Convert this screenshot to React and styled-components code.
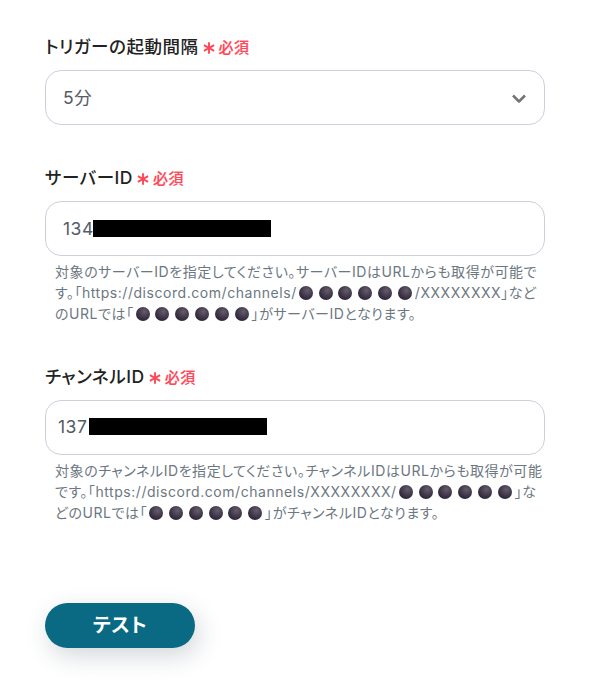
import React from "react";
import styled, { createGlobalStyle } from "styled-components";

const GlobalStyle = createGlobalStyle`
  * { box-sizing: border-box; }
  body {
    margin: 0;
    background: #fff;
    font-family: Inter, "Noto Sans CJK JP", sans-serif;
    font-feature-settings: "palt";
    -webkit-font-smoothing: antialiased;
  }
`;

const Form = styled.form`
  display: flex;
  flex-direction: column;
  align-items: flex-start;
  width: 595px;
  height: 694px;
  padding: 34px 50px 0 45px;
  overflow: hidden;
`;

const Field = styled.section`
  width: 500px;
  height: ${(p) => p.$height}px;
`;

const LabelRow = styled.div`
  display: flex;
  align-items: center;
  height: 26px;
  margin-bottom: 10px;
`;

const Label = styled.label`
  font-size: 17.5px;
  font-weight: 500;
  line-height: 26px;
  letter-spacing: 0.55px;
  color: #222;
  white-space: nowrap;
`;

const Required = styled.span`
  display: flex;
  align-items: center;
  gap: 4px;
  margin: 2px 0 0 4px;
  font-size: 15px;
  font-weight: 500;
  line-height: 24px;
  letter-spacing: 0.5px;
  color: #ff4757;
  -webkit-text-stroke: 0.2px #ff4757;
`;

const Control = styled.div`
  display: flex;
  align-items: center;
  height: 55px;
  padding: 0 17px 0 ${(p) => p.$inset || 17}px;
  border: 1px solid #cbd1da;
  border-radius: 16px;
  background: #fff;
  color: #555c66;
  font-size: 17.5px;
  line-height: 24px;
  letter-spacing: 0.5px;
`;

const Value = styled.span`
  width: ${(p) => (p.$width ? p.$width + "px" : "auto")};
  flex: ${(p) => (p.$width ? 0 : 1)} 0 auto;
  margin-top: ${(p) => p.$drop || 0}px;
`;

const Redaction = styled.span`
  width: 178px;
  height: 17px;
  margin-top: ${(p) => p.$drop || 0}px;
  background: #000;
`;

const Help = styled.p`
  margin: 5px 0 0 10px;
  font-size: 14px;
  line-height: 21px;
  color: #6c7781;
`;

const HelpLine = styled.span`
  display: flex;
  align-items: center;
  height: 21px;
  white-space: nowrap;
  letter-spacing: 0.55px;
`;

const DotGroup = styled.span`
  display: flex;
  gap: 5.8px;
  margin: 0 3px 0 2px;
`;

const Dot = styled.span`
  width: 14px;
  height: 14px;
  border-radius: 50%;
  background: radial-gradient(circle at 60% 32%, #655d6b 0%, #483f50 38%, #30263c 72%, #3a3045 100%);
`;

const TestButton = styled.button`
  width: 150px;
  height: 45px;
  padding: 0 0 2px;
  border: 0;
  border-radius: 23px;
  background: #0a6983;
  color: #fff;
  font: 700 19.5px/28px Inter, "Noto Sans CJK JP", sans-serif;
  font-feature-settings: "palt";
  letter-spacing: 0.6px;
  box-shadow: 4px 8px 24px rgba(35, 55, 75, 0.2);
`;

const Asterisk = () => (
  <svg width="12" height="12" viewBox="0 0 12 12" fill="none" stroke="currentColor" strokeWidth="1.9">
    <path d="M6 .3v11.4M.9 3.1l10.2 5.8M11.1 3.1L.9 8.9" />
  </svg>
);

const Chevron = () => (
  <svg width="16" height="16" viewBox="0 0 16 16" fill="none" stroke="#757575" strokeWidth="2.5">
    <path d="M2 5.5l6 6 6-6" strokeLinejoin="round" />
  </svg>
);

const Dots = () => (
  <DotGroup>
    {[0, 1, 2, 3, 4, 5].map((i) => <Dot key={i} />)}
  </DotGroup>
);

const Heading = ({ children }) => (
  <LabelRow>
    <Label>{children}</Label>
    <Required><Asterisk />必須</Required>
  </LabelRow>
);

export default function App() {
  return (
    <>
      <GlobalStyle />
      <Form>
        <Field $height={131}>
          <Heading>トリガーの起動間隔</Heading>
          <Control><Value>5分</Value><Chevron /></Control>
        </Field>
        <Field $height={199}>
          <Heading>サーバーID</Heading>
          <Control><Value $width={30}>134</Value><Redaction /></Control>
          <Help>
            <HelpLine>対象のサーバーIDを指定してください。サーバーIDはURLからも取得が可能で</HelpLine>
            <HelpLine>す。「https://discord.com/channels/<Dots />/XXXXXXXX」など</HelpLine>
            <HelpLine>のURLでは「<Dots />」がサーバーIDとなります。</HelpLine>
          </Help>
        </Field>
        <Field $height={239}>
          <Heading>チャンネルID</Heading>
          <Control $inset={12}><Value $width={31} $drop={-2}>137</Value><Redaction $drop={-2} /></Control>
          <Help>
            <HelpLine>対象のチャンネルIDを指定してください。チャンネルIDはURLからも取得が可能</HelpLine>
            <HelpLine>です。「https://discord.com/channels/XXXXXXXX/<Dots />」な</HelpLine>
            <HelpLine>どのURLでは「<Dots />」がチャンネルIDとなります。</HelpLine>
          </Help>
        </Field>
        <TestButton type="button">テスト</TestButton>
      </Form>
    </>
  );
}
